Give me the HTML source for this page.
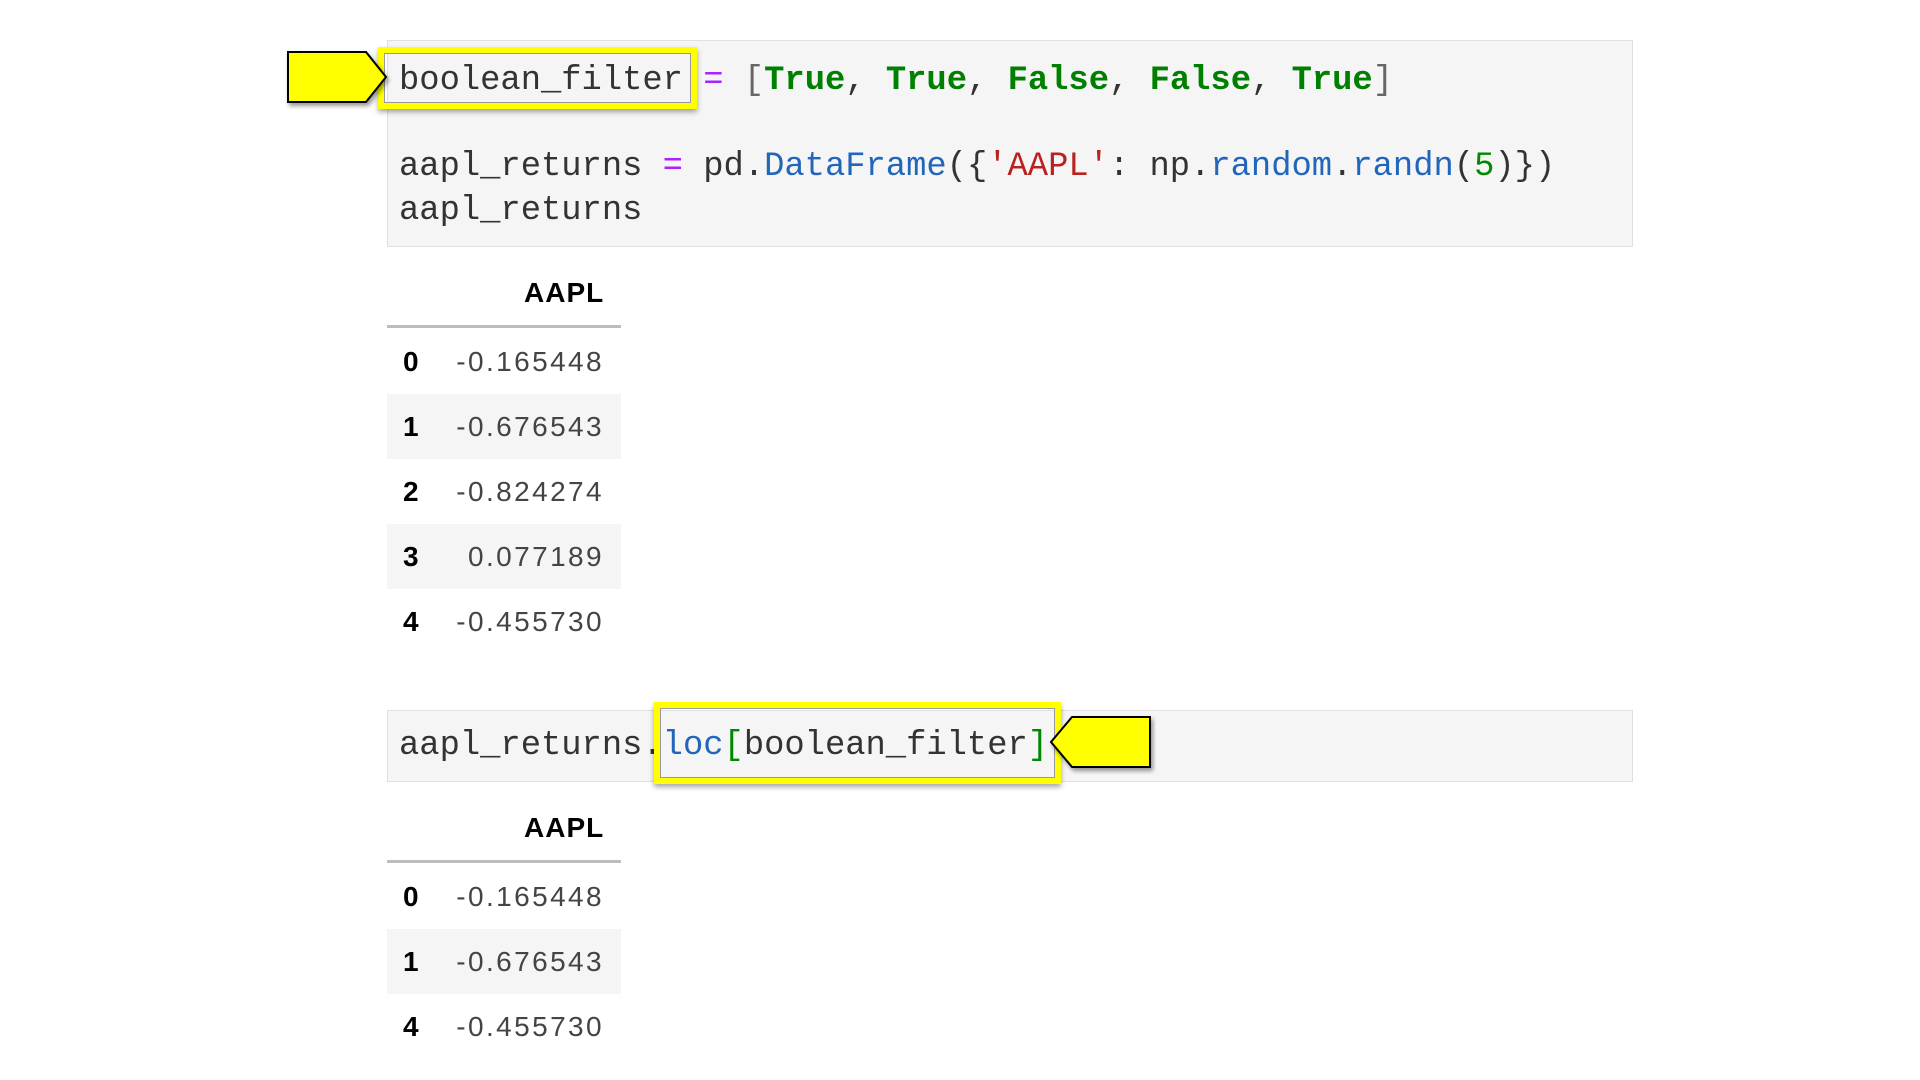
<!DOCTYPE html>
<html><head><meta charset="utf-8"><style>
body{margin:0;width:1920px;height:1080px;background:#fff;position:relative;overflow:hidden;font-family:"Liberation Sans",sans-serif;color:#333}
.abs{position:absolute}
.cell{position:absolute;left:387px;width:1246px;background:#f5f5f5;border:1px solid #e0e0e0;box-sizing:border-box}
.code{position:absolute;left:399px;font-family:"Liberation Mono",monospace;font-size:33.8px;color:#333;white-space:pre;line-height:44px}
.eq{color:#aa22ff}.kw{color:#008000;font-weight:bold}.fn{color:#2266bb}.str{color:#ba2121}.num{color:#008800}.br{color:#666}
.ybox{position:absolute;border:6px solid #ffff00;box-shadow:0 3px 5px rgba(0,0,0,.35);box-sizing:border-box}
.ybox:after{content:"";position:absolute;inset:0;border:1px solid #999}
.hdr{position:absolute;font-weight:bold;font-size:28px;color:#000;letter-spacing:1px}
.line{position:absolute;left:387px;width:234px;height:3px;background:#bdbdbd}
.stripe{position:absolute;left:387px;width:234px;height:65px;background:#f5f5f5}
.idx{position:absolute;left:403px;font-weight:bold;font-size:28px;color:#000;line-height:32px}
.val{position:absolute;right:1316px;font-size:28px;color:#444;line-height:32px;letter-spacing:2.4px}
</style></head><body>
<div class="cell" style="top:40px;height:207px"></div>
<div class="code" style="top:59px"><span>boolean_filter</span> <span class="eq">=</span> <span class="br">[</span><span class="kw">True</span>, <span class="kw">True</span>, <span class="kw">False</span>, <span class="kw">False</span>, <span class="kw">True</span><span class="br">]</span></div>
<div class="code" style="top:145px">aapl_returns <span class="eq">=</span> pd.<span class="fn">DataFrame</span>({<span class="str">'AAPL'</span>: np.<span class="fn">random</span>.<span class="fn">randn</span>(<span class="num">5</span>)})
aapl_returns</div>
<div class="ybox" style="left:378px;top:47px;width:319px;height:62px"></div>
<svg class="abs" style="left:284px;top:48px" width="110" height="62"><polygon points="4,4 82,4 102,29 82,54 4,54" fill="#ffff00" stroke="#000" stroke-width="2" style="filter:drop-shadow(2px 3px 2px rgba(0,0,0,.4))"/></svg>

<div class="hdr" style="left:524px;top:277px">AAPL</div>
<div class="line" style="top:325px"></div>
<div class="stripe" style="top:394px"></div>
<div class="stripe" style="top:524px"></div>
<div class="idx" style="top:346px">0</div><div class="val" style="top:346px">-0.165448</div>
<div class="idx" style="top:411px">1</div><div class="val" style="top:411px">-0.676543</div>
<div class="idx" style="top:476px">2</div><div class="val" style="top:476px">-0.824274</div>
<div class="idx" style="top:541px">3</div><div class="val" style="top:541px">0.077189</div>
<div class="idx" style="top:606px">4</div><div class="val" style="top:606px">-0.455730</div>

<div class="cell" style="top:710px;height:72px"></div>
<div class="code" style="top:724px">aapl_returns.<span class="fn">loc</span><span class="num">[</span>boolean_filter<span class="num">]</span></div>
<div class="ybox" style="left:654px;top:702px;width:407px;height:82px"></div>
<svg class="abs" style="left:1046px;top:713px" width="110" height="62"><polygon points="104,4 104,54 26,54 5,29 26,4" fill="#ffff00" stroke="#000" stroke-width="2" style="filter:drop-shadow(2px 3px 2px rgba(0,0,0,.4))"/></svg>

<div class="hdr" style="left:524px;top:812px">AAPL</div>
<div class="line" style="top:860px"></div>
<div class="stripe" style="top:929px"></div>
<div class="idx" style="top:881px">0</div><div class="val" style="top:881px">-0.165448</div>
<div class="idx" style="top:946px">1</div><div class="val" style="top:946px">-0.676543</div>
<div class="idx" style="top:1011px">4</div><div class="val" style="top:1011px">-0.455730</div>
</body></html>
